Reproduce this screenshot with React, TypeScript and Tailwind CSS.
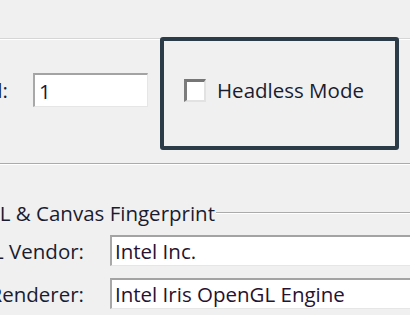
import React from 'react';

const FONT = { fontFamily: '"Open Sans", "Noto Sans", sans-serif' };

const Field: React.FC<{ label: string; value: string }> = ({ label, value }) => (
  <div className="flex items-center">
    <div className="w-[84px] shrink-0 flex justify-end">
      <span className="shrink-0 whitespace-nowrap text-[#1a1c30]">{label}</span>
    </div>
    <div className="ml-[26px] flex-1 h-[31px] flex items-center bg-white border-t-2 border-l-2 border-r border-b border-t-[#a3a3a3] border-l-[#a8a8a8] border-r-[#e6e6e6] border-b-[#e6e6e6] pl-[3px] -mr-[20px]">
      <span className="whitespace-nowrap text-[#281230]">{value}</span>
    </div>
  </div>
);

export default function App() {
  return (
    <div className="w-[410px] h-[315px] overflow-hidden bg-[#f0f0f0] text-[20.5px] leading-[28px]" style={FONT}>
      {/* top group */}
      <div className="pt-[38px]">
        <div className="h-px bg-[#d6d6d6]" />
        <div className="h-px bg-white" />
        <div className="flex items-start -mt-[3px]">
          <div className="w-[160px] shrink-0 pt-[36px] flex items-center">
            <div className="w-[8px] shrink-0 flex justify-end">
              <span className="shrink-0 whitespace-nowrap text-[#1a1c30]">Seed:</span>
            </div>
            <div className="ml-[25px] w-[115px] h-[34px] flex items-center bg-white border-t-2 border-l-2 border-r border-b border-t-[#a3a3a3] border-l-[#a8a8a8] border-r-[#e6e6e6] border-b-[#e6e6e6] pl-[4px]">
              <span className="text-[#281230]">1</span>
            </div>
          </div>
          <div className="w-[239px] h-[113px] shrink-0 border-4 border-[#2b3b48] rounded-[3px] pl-[20px] pt-[35px]">
            <label className="flex items-center gap-[11px]">
              <span className="w-[22px] h-[23px] bg-white border-t-[3px] border-l-[3px] border-r-2 border-b-2 border-t-[#767676] border-l-[#7c7c7c] border-r-[#e2e2e2] border-b-[#e2e2e2]" />
              <span className="whitespace-nowrap text-[#1a1c30]">Headless Mode</span>
            </label>
          </div>
        </div>
        <div className="mt-[13px] h-px bg-[#ababab]" />
        <div className="h-px bg-white" />
      </div>

      {/* WebGL group */}
      <div className="mt-[34px]">
        <div className="flex items-center">
          <div className="w-[215px] shrink-0 flex justify-end">
            <span className="shrink-0 whitespace-nowrap text-[#1a1c30]">WebGL &amp; Canvas Fingerprint</span>
          </div>
          <div className="flex-1 ml-[1px]">
            <div className="h-px bg-[#ababab]" />
            <div className="h-px bg-white" />
          </div>
        </div>
        <div className="mt-[8px] flex flex-col gap-[12px]">
          <Field label="WebGL Vendor:" value="Intel Inc." />
          <Field label="WebGL Renderer:" value="Intel Iris OpenGL Engine" />
        </div>
      </div>
    </div>
  );
}
